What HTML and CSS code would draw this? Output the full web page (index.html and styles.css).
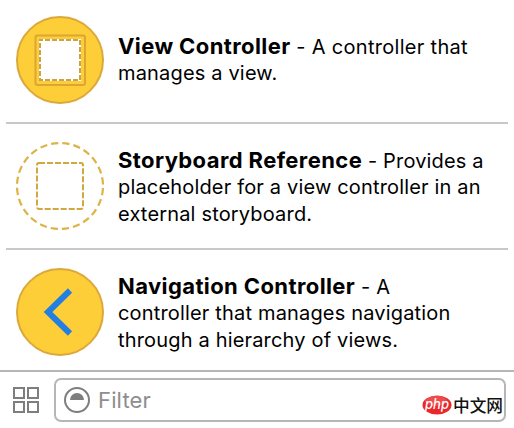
FILE: index.html
```html
<!DOCTYPE html>
<html lang="en">
<head>
<meta charset="utf-8">
<title>Object Library</title>
<link rel="stylesheet" href="styles.css">
</head>
<body>
<main class="library">
  <article class="item item-first">
    <svg class="icon" viewBox="0 0 90 90">
      <circle cx="45" cy="45" r="43" fill="#fdce37" stroke="#dba83c" stroke-width="2"/>
      <rect x="20.5" y="20.5" width="49.5" height="49.5" rx="2" fill="#fdce37" stroke="#dba632" stroke-width="2"/>
      <rect x="24" y="24" width="42" height="42" fill="#fff"/>
      <rect x="25" y="25" width="40" height="40" fill="none" stroke="#c7a34b" stroke-width="2" stroke-dasharray="5 2" stroke-dashoffset="2"/>
    </svg>
    <p class="text"><b>View Controller</b> <span class="lead">- A controller that</span><br>manages a view.</p>
  </article>
  <article class="item item-second">
    <svg class="icon" viewBox="0 0 90 90">
      <circle cx="45" cy="45" r="43" fill="none" stroke="#dcb345" stroke-width="2.2" stroke-dasharray="7.2 4.056" stroke-dashoffset="9.2"/>
      <rect x="22" y="22" width="46" height="46" rx="2" fill="none" stroke="#d0a83e" stroke-width="2" stroke-dasharray="6 2"/>
    </svg>
    <p class="text"><b>Storyboard Reference</b> - Provides a<br>placeholder for a view controller in an<br>external storyboard.</p>
  </article>
  <article class="item item-third">
    <svg class="icon" viewBox="0 0 90 90">
      <circle cx="45" cy="45" r="43" fill="#fdce37" stroke="#dba83c" stroke-width="2"/>
      <path d="M55 23.5 L33 45 L55 66.500" fill="none" stroke="#237fe2" stroke-width="6"/>
    </svg>
    <p class="text"><b>Navigation Controller</b> - A<br>controller that manages navigation<br>through a hierarchy of views.</p>
  </article>
</main>
<footer class="bar">
  <svg class="grid-icon" viewBox="0 0 28 28" fill="none" stroke="#7e7e7e" stroke-width="2">
    <path d="M2 2h10v10H2zM16 2h10v10H16zM2 16h10v10H2zM16 16h10v10H16z"/>
  </svg>
  <div class="field">
    <svg class="filter-icon" viewBox="0 0 28 28">
      <circle cx="14" cy="14" r="12" fill="none" stroke="#7e7e7e" stroke-width="2"/>
      <path d="M7 14a7 7 0 0 1 14 0z" fill="#7e7e7e"/>
    </svg>
    <span class="placeholder">Filter</span>
    <svg class="mark" viewBox="0 0 84 30">
      <ellipse cx="15" cy="15" rx="14.500" ry="9.500" fill="#e9272d"/>
      <ellipse cx="14" cy="11" rx="11" ry="5" fill="#f47a72" opacity=".45"/>
      <text class="php" x="15" y="19" text-anchor="middle" textLength="24" lengthAdjust="spacingAndGlyphs">php</text>
      <text class="cn" x="31" y="21.500" textLength="50" lengthAdjust="spacingAndGlyphs">中文网</text>
    </svg>
  </div>
</footer>
</body>
</html>
```
FILE: styles.css
```css
* { box-sizing: border-box; }
body {
  margin: 0;
  width: 514px;
  height: 428px;
  overflow: hidden;
  display: flex;
  flex-direction: column;
  background: #fff;
  color: #000;
  font-family: Inter, "Liberation Sans", sans-serif;
}
.library { height: 370px; padding: 0 6px; }
.item { display: flex; padding-left: 9px; }
.item-first { height: 124px; padding-top: 15px; border-bottom: 2px solid #c8c8c8; }
.item-second { height: 126px; padding-top: 17px; border-bottom: 2px solid #c8c8c8; }
.item-third { height: 120px; padding-top: 17px; }
.icon { width: 90px; height: 90px; flex: none; }
.text {
  margin: 6px 0 0 13px;
  font-size: 20px;
  line-height: 26.4px;
  letter-spacing: 0.17px;
  white-space: nowrap;
}
.item-first .text { margin-top: 18px; }
.text b { font-size: 22px; font-weight: 700; line-height: 26px; letter-spacing: 0.4px; }
.lead { letter-spacing: 0.3px; }
.bar {
  height: 58px;
  border-top: 2px solid #b6b6b6;
  display: flex;
  align-items: flex-start;
  padding: 6px 8px 0 12px;
}
.grid-icon { width: 28px; height: 28px; margin-top: 8px; }
.field {
  margin-left: 14px;
  flex: 1;
  height: 44px;
  border: 2px solid #b6b6b6;
  border-radius: 7px;
  display: flex;
  align-items: center;
  padding-left: 7px;
}
.filter-icon { width: 28px; height: 28px; }
.placeholder { margin-left: 7px; font-size: 22px; letter-spacing: 0.15px; color: #8e8e8e; }
.mark { width: 84px; height: 30px; margin: 10px -2px 0 auto; overflow: visible; }
.php { font: italic 500 14px Inter, sans-serif; fill: #fff; }
.cn { font: 500 17px "Noto Sans CJK SC", sans-serif; fill: #111; }
```
